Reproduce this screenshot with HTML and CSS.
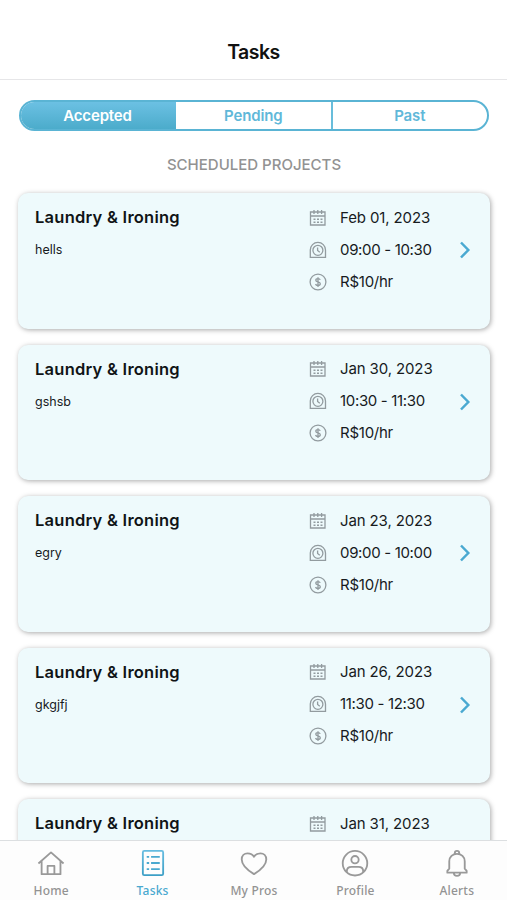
FILE: index.html
```html
<!DOCTYPE HTML>
<html lang="en">
<head>
    <meta charset="utf-8">
    <meta name="viewport" content="width=device-width, initial-scale=1.0">
    <title>Tasks</title>
    <link rel="stylesheet" href="styles.css">
</head>
<body>
    <svg class="sprite" width="0" height="0">
        <defs>
            <linearGradient id="blue" x1="0" y1="0" x2="0" y2="1">
                <stop offset="0" stop-color="#66bce0"/>
                <stop offset="1" stop-color="#3c9fc6"/>
            </linearGradient>
            <symbol id="calendar" viewBox="0 0 18 18">
                <path d="M1.500 3h14.500v13H1.500zM1.500 7h14.500M5 1v4M8.800 1v4M12.600 1v4"/>
                <path d="M4.500 10.200h2M8 10.200h2M11.500 10.200h2M4.500 13.200h2M8 13.200h2M11.500 13.200h2" stroke-width="1.500"/>
            </symbol>
            <symbol id="clock" viewBox="0 0 18 18">
                <path d="M1.300 16.400V9a7.600 7.600 0 0 1 15.200 0v7.400z"/>
                <circle cx="8.900" cy="9.300" r="5"/>
                <path d="M8.600 6.500v3l2.200 1.700"/>
            </symbol>
            <symbol id="dollar" viewBox="0 0 18 18">
                <circle cx="9" cy="9" r="7.900"/>
                <path d="M11.200 6.900c-.3-.9-1.100-1.300-2.200-1.300-1.300 0-2.200.6-2.200 1.600 0 2.300 4.500 1.200 4.500 3.600 0 1-.9 1.700-2.300 1.700-1.200 0-2.200-.5-2.400-1.500M9 4.200v9.700"/>
            </symbol>
            <symbol id="chevron" viewBox="0 0 12 18">
                <path d="M2 1.500l7.300 7.500L2 16.500"/>
            </symbol>
        </defs>
    </svg>

    <div class="screen">
        <header class="header">
            <h1>Tasks</h1>
        </header>

        <main class="content">
            <div class="tabs">
                <div class="tab active">Accepted</div>
                <div class="tab">Pending</div>
                <div class="tab">Past</div>
            </div>
            <h2 class="section-title">SCHEDULED PROJECTS</h2>

            <article class="card">
                <div class="info">
                    <h3>Laundry &amp; Ironing</h3>
                    <p>hells</p>
                </div>
                <ul class="details">
                    <li><svg class="icon"><use href="#calendar"/></svg><span class="date">Feb 01, 2023</span></li>
                    <li><svg class="icon"><use href="#clock"/></svg><span class="time">09:00 - 10:30</span></li>
                    <li><svg class="icon"><use href="#dollar"/></svg><span class="rate">R$10/hr</span></li>
                </ul>
                <svg class="chevron"><use href="#chevron"/></svg>
            </article>

            <article class="card">
                <div class="info">
                    <h3>Laundry &amp; Ironing</h3>
                    <p>gshsb</p>
                </div>
                <ul class="details">
                    <li><svg class="icon"><use href="#calendar"/></svg><span class="date">Jan 30, 2023</span></li>
                    <li><svg class="icon"><use href="#clock"/></svg><span class="time">10:30 - 11:30</span></li>
                    <li><svg class="icon"><use href="#dollar"/></svg><span class="rate">R$10/hr</span></li>
                </ul>
                <svg class="chevron"><use href="#chevron"/></svg>
            </article>

            <article class="card">
                <div class="info">
                    <h3>Laundry &amp; Ironing</h3>
                    <p>egry</p>
                </div>
                <ul class="details">
                    <li><svg class="icon"><use href="#calendar"/></svg><span class="date">Jan 23, 2023</span></li>
                    <li><svg class="icon"><use href="#clock"/></svg><span class="time">09:00 - 10:00</span></li>
                    <li><svg class="icon"><use href="#dollar"/></svg><span class="rate">R$10/hr</span></li>
                </ul>
                <svg class="chevron"><use href="#chevron"/></svg>
            </article>

            <article class="card">
                <div class="info">
                    <h3>Laundry &amp; Ironing</h3>
                    <p>gkgjfj</p>
                </div>
                <ul class="details">
                    <li><svg class="icon"><use href="#calendar"/></svg><span class="date">Jan 26, 2023</span></li>
                    <li><svg class="icon"><use href="#clock"/></svg><span class="time">11:30 - 12:30</span></li>
                    <li><svg class="icon"><use href="#dollar"/></svg><span class="rate">R$10/hr</span></li>
                </ul>
                <svg class="chevron"><use href="#chevron"/></svg>
            </article>

            <article class="card">
                <div class="info">
                    <h3>Laundry &amp; Ironing</h3>
                </div>
                <ul class="details">
                    <li><svg class="icon"><use href="#calendar"/></svg><span class="date">Jan 31, 2023</span></li>
                </ul>
                <svg class="chevron"><use href="#chevron"/></svg>
            </article>
        </main>

        <nav class="nav">
            <a class="nav-item">
                <svg viewBox="0 0 30 30">
                    <path d="M2 15L15 3.500 28 15M5.300 12.500v13.500h19.500V12.500M11.500 26v-8.500h7V26"/>
                </svg>
                <span>Home</span>
            </a>
            <a class="nav-item active">
                <svg viewBox="0 0 30 30">
                    <rect x="4.500" y="2" width="21" height="25" rx="1.500"/>
                    <path d="M8.500 8.200h2.500M13 8.200h9M8.500 14.500h2.500M13 14.500h9M8.500 20.800h2.500M13 20.800h9"/>
                </svg>
                <span>Tasks</span>
            </a>
            <a class="nav-item">
                <svg viewBox="0 0 30 30">
                    <path d="M15 26C11 23.500 2.300 17.500 2.300 10.800 2.300 7 5 4.500 8.300 4.500c3 0 5.500 1.300 6.700 3.500 1.200-2.200 3.700-3.500 6.700-3.500 3.300 0 6 2.500 6 6.300C27.700 17.500 19 23.500 15 26z"/>
                </svg>
                <span>My Pros</span>
            </a>
            <a class="nav-item">
                <svg viewBox="0 0 30 30">
                    <circle cx="15" cy="14.700" r="12.700"/>
                    <circle cx="15" cy="11" r="3.800"/>
                    <path d="M6.500 24v-.8c0-3 2.200-4.700 5-4.700h7c2.800 0 5 1.700 5 4.700v.8"/>
                </svg>
                <span>Profile</span>
            </a>
            <a class="nav-item">
                <svg viewBox="0 0 30 30">
                    <path d="M12.700 5.200V4.300a2.300 2.300 0 0 1 4.600 0v.9M5 24.500v-1.800l2-2.300v-7.700c0-4.500 3.500-7.700 8-7.700s8 3.200 8 7.700v7.700l2 2.300v1.800zM11.700 24.500a3.300 3.300 0 0 0 6.600 0"/>
                </svg>
                <span>Alerts</span>
            </a>
        </nav>
    </div>
</body>
</html>
```
FILE: styles.css
```css
*{
    padding: 0;
    margin: 0;
    box-sizing: border-box;
}
body {
    font-family: Inter, "Liberation Sans", sans-serif;
    background-color: #fff;
    color: #171b1e;
}
.sprite {
    display: block;
}
.screen {
    display: flex;
    flex-direction: column;
    height: 100vh;
    overflow: hidden;
}
.header {
    flex: none;
    height: 80px;
    padding-top: 24px;
    border-bottom: 1px solid #e6e6e8;
    display: flex;
    justify-content: center;
    align-items: center;
}
.header h1 {
    font-size: 19.500px;
    font-weight: 600;
    letter-spacing: -.5px;
    color: #111;
}
.content {
    flex: 1;
    min-height: 0;
    overflow: hidden;
    padding: 20px 17px 0 18px;
}
.tabs {
    display: flex;
    height: 31px;
    margin: 0 1px;
    border: 2px solid #5ab4d4;
    border-radius: 16px;
    overflow: hidden;
    background-color: #fff;
}
.tab {
    flex: 1;
    display: flex;
    justify-content: center;
    align-items: center;
    font-size: 15px;
    font-weight: 600;
    letter-spacing: -.15px;
    color: #60b8d9;
}
.tab:last-child {
    border-left: 2px solid #68bddb;
}
.tab.active {
    flex: none;
    width: 157px;
    margin: -2px 0 -2px -2px;
    color: #fff;
    background: linear-gradient(#6ec2e5, #49aac9);
}
.section-title {
    height: 62px;
    line-height: 67px;
    text-align: center;
    font-size: 15px;
    font-weight: 500;
    color: #929292;
}
.card {
    display: flex;
    height: 135.500px;
    margin-bottom: 16px;
    padding: 8px 19px 0 17px;
    border-radius: 10px;
    background-color: #eefafc;
    box-shadow: 1px 1px 5px rgba(0, 0, 0, .34);
}
.info {
    flex: 1;
}
.info h3 {
    line-height: 32px;
    font-size: 16.500px;
    font-weight: 600;
    letter-spacing: .25px;
    color: #101416;
}
.info p {
    line-height: 34px;
    font-size: 12.500px;
}
.details {
    width: 150px;
    list-style: none;
}
.details li {
    display: flex;
    align-items: center;
    height: 32px;
    font-size: 15px;
}
.date {
    letter-spacing: -.12px;
}
.time {
    letter-spacing: -.33px;
}
.rate {
    letter-spacing: -.25px;
}
.icon {
    width: 18px;
    height: 18px;
    margin: 1px 13px 0 0;
    fill: none;
    stroke: #929b9f;
    stroke-width: 1.300;
}
.chevron {
    width: 12px;
    height: 18px;
    margin-top: 40px;
    fill: none;
    stroke: #4aa9d1;
    stroke-width: 2.500;
}
.nav {
    flex: none;
    display: flex;
    height: 60px;
    border-top: 1px solid #dcdfe1;
    background-color: #fdfdfd;
}
.nav-item {
    flex: 1;
    display: flex;
    flex-direction: column;
    align-items: center;
    padding: 8px 0 0 1px;
    font-family: "Noto Sans", sans-serif;
    font-size: 12px;
    font-weight: 500;
    line-height: 19px;
    letter-spacing: .2px;
    color: #939393;
}
.nav-item svg {
    width: 30px;
    height: 30px;
    margin-bottom: 3px;
    fill: none;
    stroke: #999;
    stroke-width: 1.900;
    stroke-linejoin: round;
}
.nav-item.active {
    color: #4aa9d0;
}
.nav-item.active svg {
    stroke: url(#blue);
}
.nav-item.active path {
    stroke: #4aa9d0;
}
```
